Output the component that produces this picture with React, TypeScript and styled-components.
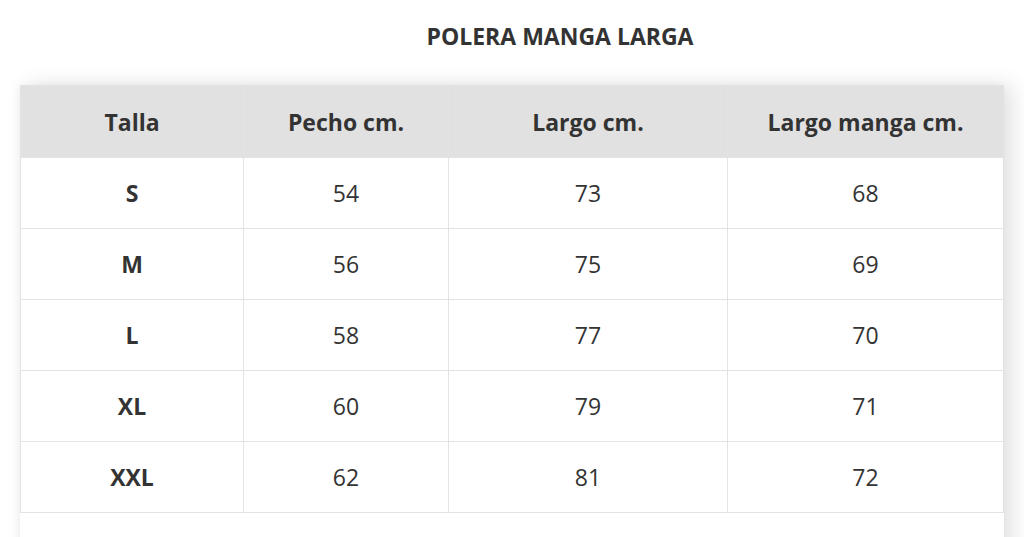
import styled, { createGlobalStyle } from 'styled-components';

const GlobalStyle = createGlobalStyle`
    html, body {
        margin: 0;
        padding: 0;
        background: #ffffff;
        font-family: "Open Sans", "Liberation Sans", sans-serif;
        color: #333333;
    }
`

const rows = [
    { size: 'S', chest: 54, length: 73, sleeve: 68 },
    { size: 'M', chest: 56, length: 75, sleeve: 69 },
    { size: 'L', chest: 58, length: 77, sleeve: 70 },
    { size: 'XL', chest: 60, length: 79, sleeve: 71 },
    { size: 'XXL', chest: 62, length: 81, sleeve: 72 },
]

function App() {
    return (
        <>
            <GlobalStyle />
            <Page>
                <Title>POLERA MANGA LARGA</Title>
                <Card>
                    <SizeTable>
                        <colgroup>
                            <col style={{ width: 223 }} />
                            <col style={{ width: 205 }} />
                            <col style={{ width: 279 }} />
                            <col style={{ width: 276 }} />
                        </colgroup>
                        <thead>
                            <tr>
                                <HeadCell>Talla</HeadCell>
                                <HeadCell>Pecho cm.</HeadCell>
                                <HeadCell>Largo cm.</HeadCell>
                                <HeadCell>Largo manga cm.</HeadCell>
                            </tr>
                        </thead>
                        <tbody>
                            {rows.map((r) => (
                                <tr key={r.size}>
                                    <Cell $bold>{r.size}</Cell>
                                    <Cell>{r.chest}</Cell>
                                    <Cell>{r.length}</Cell>
                                    <Cell>{r.sleeve}</Cell>
                                </tr>
                            ))}
                        </tbody>
                    </SizeTable>
                </Card>
            </Page>
        </>
    )
}

const Page = styled.div`
    display: flex;
    flex-direction: column;
    padding: 0 20px;
    height: 537px;
    overflow: hidden;
`

const Title = styled.h2`
    margin: 0;
    flex-shrink: 0;
    height: 85px;
    display: flex;
    align-items: center;
    justify-content: center;
    padding-left: 96px;
    padding-bottom: 14px;
    box-sizing: border-box;
    font-size: 23px;
    font-weight: 700;
    color: #333333;
`

const Card = styled.div`
    flex-shrink: 0;
    width: 984px;
    background: #ffffff;
    padding-bottom: 60px;
    box-shadow: 8px 0 20px rgba(0, 0, 0, 0.12), -2px 0 6px rgba(0, 0, 0, 0.04);
`

const SizeTable = styled.table`
    width: 983px;
    border-collapse: collapse;
    table-layout: fixed;
`

const HeadCell = styled.th`
    height: 71px;
    padding: 0;
    background: #e1e1e1;
    border: 1px solid #e3e3e3;
    font-size: 23px;
    font-weight: 700;
    color: #333333;
    text-align: center;
`

const Cell = styled.td<{ $bold?: boolean }>`
    height: 70px;
    padding: 0;
    border: 1px solid #e3e3e3;
    font-size: 23px;
    font-weight: ${(p) => (p.$bold ? 700 : 400)};
    color: #333333;
    text-align: center;
`

export default App;
